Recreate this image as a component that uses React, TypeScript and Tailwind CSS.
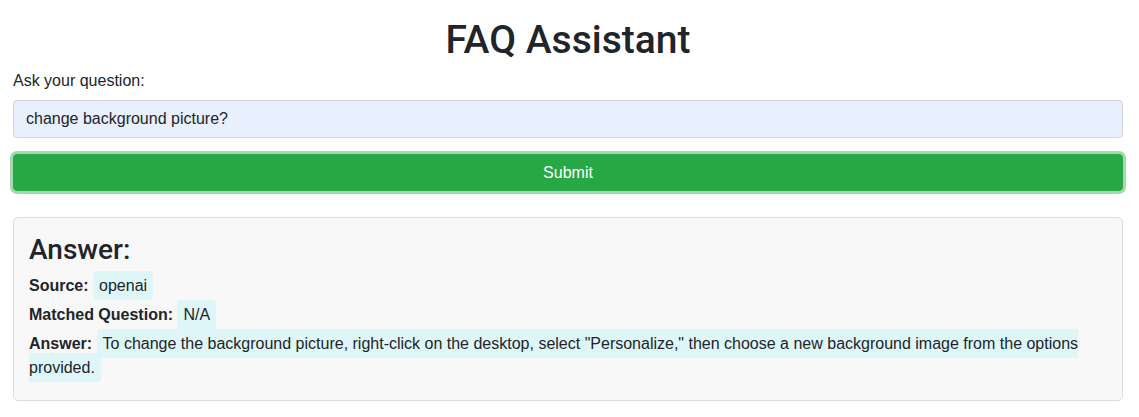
import React from "react";

function Hl({ children }: { children: React.ReactNode }) {
  return <span className="bg-[#dff6f9] px-[6px] py-[6px] rounded-[4px]">{children}</span>;
}

export default function App() {
  return (
    <div className="font-['Liberation_Sans',Arial,sans-serif] text-[#212529] text-[16px] leading-[24px] pl-[13px] pr-[16px] pt-[16px] bg-white min-h-[417px]">
      <h1 className="font-['Roboto',sans-serif] font-medium text-[39px] leading-[48px] text-center mb-[5px]">
        FAQ Assistant
      </h1>
      <label className="block mb-[7px]">Ask your question:</label>
      <input
        type="text"
        defaultValue="change background picture?"
        className="block w-full h-[38px] px-[12px] bg-[#e8f0fe] border border-[#ced4da] rounded-[4px] text-[16px] text-[#212529] outline-none"
      />
      <button className="mt-[16px] block w-full h-[37px] bg-[#28a745] border border-[#28a745] rounded-[4px] text-white text-[16px] shadow-[0_0_0_3px_rgba(72,180,97,0.5)]">
        Submit
      </button>
      <div className="mt-[26px] bg-[#f8f8f8] border border-[#dcdcdc] rounded-[5px] px-[15px] pt-[15px] pb-[15px]">
        <h3 className="font-['Roboto',sans-serif] font-medium text-[28px] leading-[34px] mb-[7px]">Answer:</h3>
        <div className="mb-[5px]">
          <strong className="font-bold">Source:</strong> <Hl>openai</Hl>
        </div>
        <div className="mb-[5px]">
          <strong className="font-bold">Matched Question:</strong> <Hl>N/A</Hl>
        </div>
        <div className="mb-[5px]">
          <strong className="font-bold">Answer:</strong>{" "}
          <Hl>
            To change the background picture, right-click on the desktop, select "Personalize," then choose a new
            background image from the options provided.
          </Hl>
        </div>
      </div>
    </div>
  );
}
